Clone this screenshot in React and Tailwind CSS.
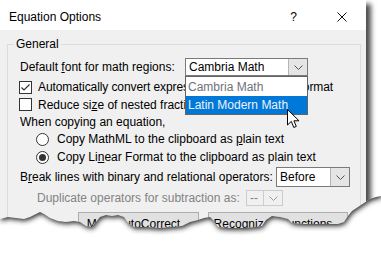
import React from 'react';

const edge = [
  [0, 219], [8, 217], [16, 218], [24, 219], [30, 217], [36, 214], [40, 212], [44, 214], [50, 218],
  [58, 221], [66, 222], [74, 221], [80, 222], [86, 226], [92, 227], [96, 222], [100, 217], [106, 215],
  [112, 216], [118, 215], [124, 217], [128, 223], [134, 227], [146, 227], [160, 228], [172, 227],
  [182, 226], [190, 222], [198, 220], [204, 218], [210, 217], [214, 221], [218, 227], [230, 228],
  [244, 228], [256, 227], [262, 226], [266, 220], [272, 216], [280, 217], [288, 219], [292, 223],
  [304, 224], [316, 224], [328, 224], [338, 224], [344, 222], [348, 216], [352, 211], [358, 207],
  [364, 203], [370, 199], [376, 197], [381, 196],
];

const TOP = 190;
const line = edge.map(([x, y]) => `${x},${y - TOP}`).join(' L');
const below = `M${line} L381,66 L0,66 Z`;
const above = `M0,0 L381,0 L${edge.slice().reverse().map(([x, y]) => `${x},${y - TOP}`).join(' L')} Z`;

function Chevron({ color = '#444' }) {
  return (
    <svg width="9" height="5" viewBox="0 0 9 5">
      <path d="M0.5 0.5 L4.5 4.5 L8.5 0.5" fill="none" stroke={color} strokeWidth="1" />
    </svg>
  );
}

function Combo({ value, width, disabled }) {
  return (
    <div
      className={`flex h-full border ${disabled ? 'border-[#cccccc]' : 'border-[#7a7a7a]'}`}
      style={{ width }}
    >
      <div className={`flex-1 flex items-center pl-[3px] ${disabled ? 'bg-[#f0f0f0] text-[#838383]' : 'bg-white'}`}>
        {value}
      </div>
      <div
        className={`w-[19px] flex items-center justify-center border-l ${
          disabled ? 'border-[#cccccc] bg-[#f0f0f0]' : 'border-[#b5b5b5] bg-[#e5e5e5]'
        }`}
      >
        <Chevron color={disabled ? '#9a9a9a' : '#555'} />
      </div>
    </div>
  );
}

function Checkbox({ checked }) {
  return (
    <div className="w-[13px] h-[13px] border border-[#333] bg-white flex items-center justify-center shrink-0">
      {checked && (
        <svg width="11" height="11" viewBox="0 0 11 11">
          <path d="M1.5 5.5 L4 8 L9.5 2.5" fill="none" stroke="#333" strokeWidth="1.2" />
        </svg>
      )}
    </div>
  );
}

function Radio({ checked }) {
  return (
    <div className="w-[13px] h-[13px] rounded-full border border-[#333] bg-white flex items-center justify-center shrink-0">
      {checked && <div className="w-[7px] h-[7px] rounded-full bg-[#333]" />}
    </div>
  );
}

export default function App() {
  return (
    <div className="relative w-[381px] h-[256px] overflow-hidden bg-white text-[12px] leading-[14px] text-black font-['Liberation_Sans',Arial,sans-serif]">
      <div className="w-[366px] h-[245px] bg-[#f0f0f0] shadow-[5px_4px_5px_rgba(0,0,0,0.7)]">
        {/* Title bar */}
        <div className="h-[30px] bg-white flex items-center pl-[9px] pr-[19px] pt-[3px]">
          <span className="flex-1">Equation Options</span>
          <span className="mr-[40px]">?</span>
          <svg width="10" height="10" viewBox="0 0 10 10">
            <path d="M0.5 0.5 L9.5 9.5 M9.5 0.5 L0.5 9.5" stroke="#111" strokeWidth="1" />
          </svg>
        </div>

        <fieldset className="mt-[7px] ml-[7px] w-[354px] border border-[#dcdcdc] min-w-0">
          <legend className="ml-[6px] px-[2px]">General</legend>
          <div className="pl-[11px] whitespace-nowrap">
            <div className="mt-[7px] h-[18px] flex items-center">
              <span className="w-[166px] pl-[1px]">
                Default <span className="underline">f</span>ont for math regions:
              </span>
              <Combo value="Cambria Math" width={123} />
            </div>

            <div className="mt-[2px] h-[18px] flex items-center">
              <Checkbox checked />
              <span className="ml-[6px] tracking-[-0.09px]">Automatically convert expressions to professional format</span>
            </div>

            <div className="h-[17px] flex items-center">
              <Checkbox />
              <span className="ml-[6px]">
                Reduce si<span className="underline">z</span>e of nested fractions in display
              </span>
            </div>

            <div className="h-[17px] flex items-center pl-[1px]">When copying an equation,</div>

            <div className="h-[18px] flex items-center pl-[17px]">
              <Radio />
              <span className="ml-[8px]">
                Copy MathML to the clipboard as <span className="underline">p</span>lain text
              </span>
            </div>

            <div className="h-[18px] flex items-center pl-[17px]">
              <Radio checked />
              <span className="ml-[8px]">
                Copy Li<span className="underline">n</span>ear Format to the clipboard as plain text
              </span>
            </div>

            <div className="mt-[1px] h-[20px] flex items-center">
              <span className="w-[257px] pl-[1px]">
                B<span className="underline">r</span>eak lines with binary and relational operators:
              </span>
              <Combo value="Before" width={74} />
            </div>

            <div className="mt-[3px] h-[16px] flex items-center">
              <span className="w-[227px] pl-[18px] text-[#838383]">Duplicate operators for subtraction as:</span>
              <Combo value="--" width={37} disabled />
            </div>

            <div className="mt-[6px] pb-[12px] flex gap-[9px] pl-[59px]">
              <button className="w-[121px] h-[23px] border border-[#adadad] bg-[#e1e1e1]">
                Math <span className="underline">A</span>utoCorrect...
              </button>
              <button className="w-[140px] h-[23px] border border-[#adadad] bg-[#e1e1e1]">
                R<span className="underline">e</span>cognized Functions...
              </button>
            </div>
          </div>
        </fieldset>
      </div>

      {/* open dropdown list */}
      <div className="absolute left-[185px] top-[76px] w-[123px] border border-[#646464] bg-white">
        <div className="h-[19px] flex items-center pl-[2px] text-[#6d737b]">Cambria Math</div>
        <div className="h-[18px] flex items-center pl-[2px] bg-[#0078d7] text-[#eef3fa]">Latin Modern Math</div>
      </div>

      {/* mouse cursor */}
      <svg className="absolute left-[287px] top-[109px]" width="13" height="20" viewBox="0 0 13 20">
        <path
          d="M0.5 0.5 L0.5 16 L4.3 12.4 L6.8 18.5 L9.3 17.4 L6.9 11.8 L12 11.8 Z"
          fill="#fff"
          stroke="#000"
          strokeWidth="1"
          strokeLinejoin="round"
        />
      </svg>

      {/* torn paper edge */}
      <svg className="absolute left-0 top-[190px]" width="381" height="66" viewBox="0 0 381 66">
        <defs>
          <clipPath id="below">
            <path d={below} />
          </clipPath>
          <filter id="blur" x="-5%" y="-50%" width="110%" height="200%">
            <feGaussianBlur stdDeviation="2.4" />
          </filter>
        </defs>
        <path d={below} fill="#fff" />
        <g clipPath="url(#below)">
          <path d={above} fill="#2a2a2a" filter="url(#blur)" transform="translate(1,2)" />
        </g>
      </svg>
    </div>
  );
}
